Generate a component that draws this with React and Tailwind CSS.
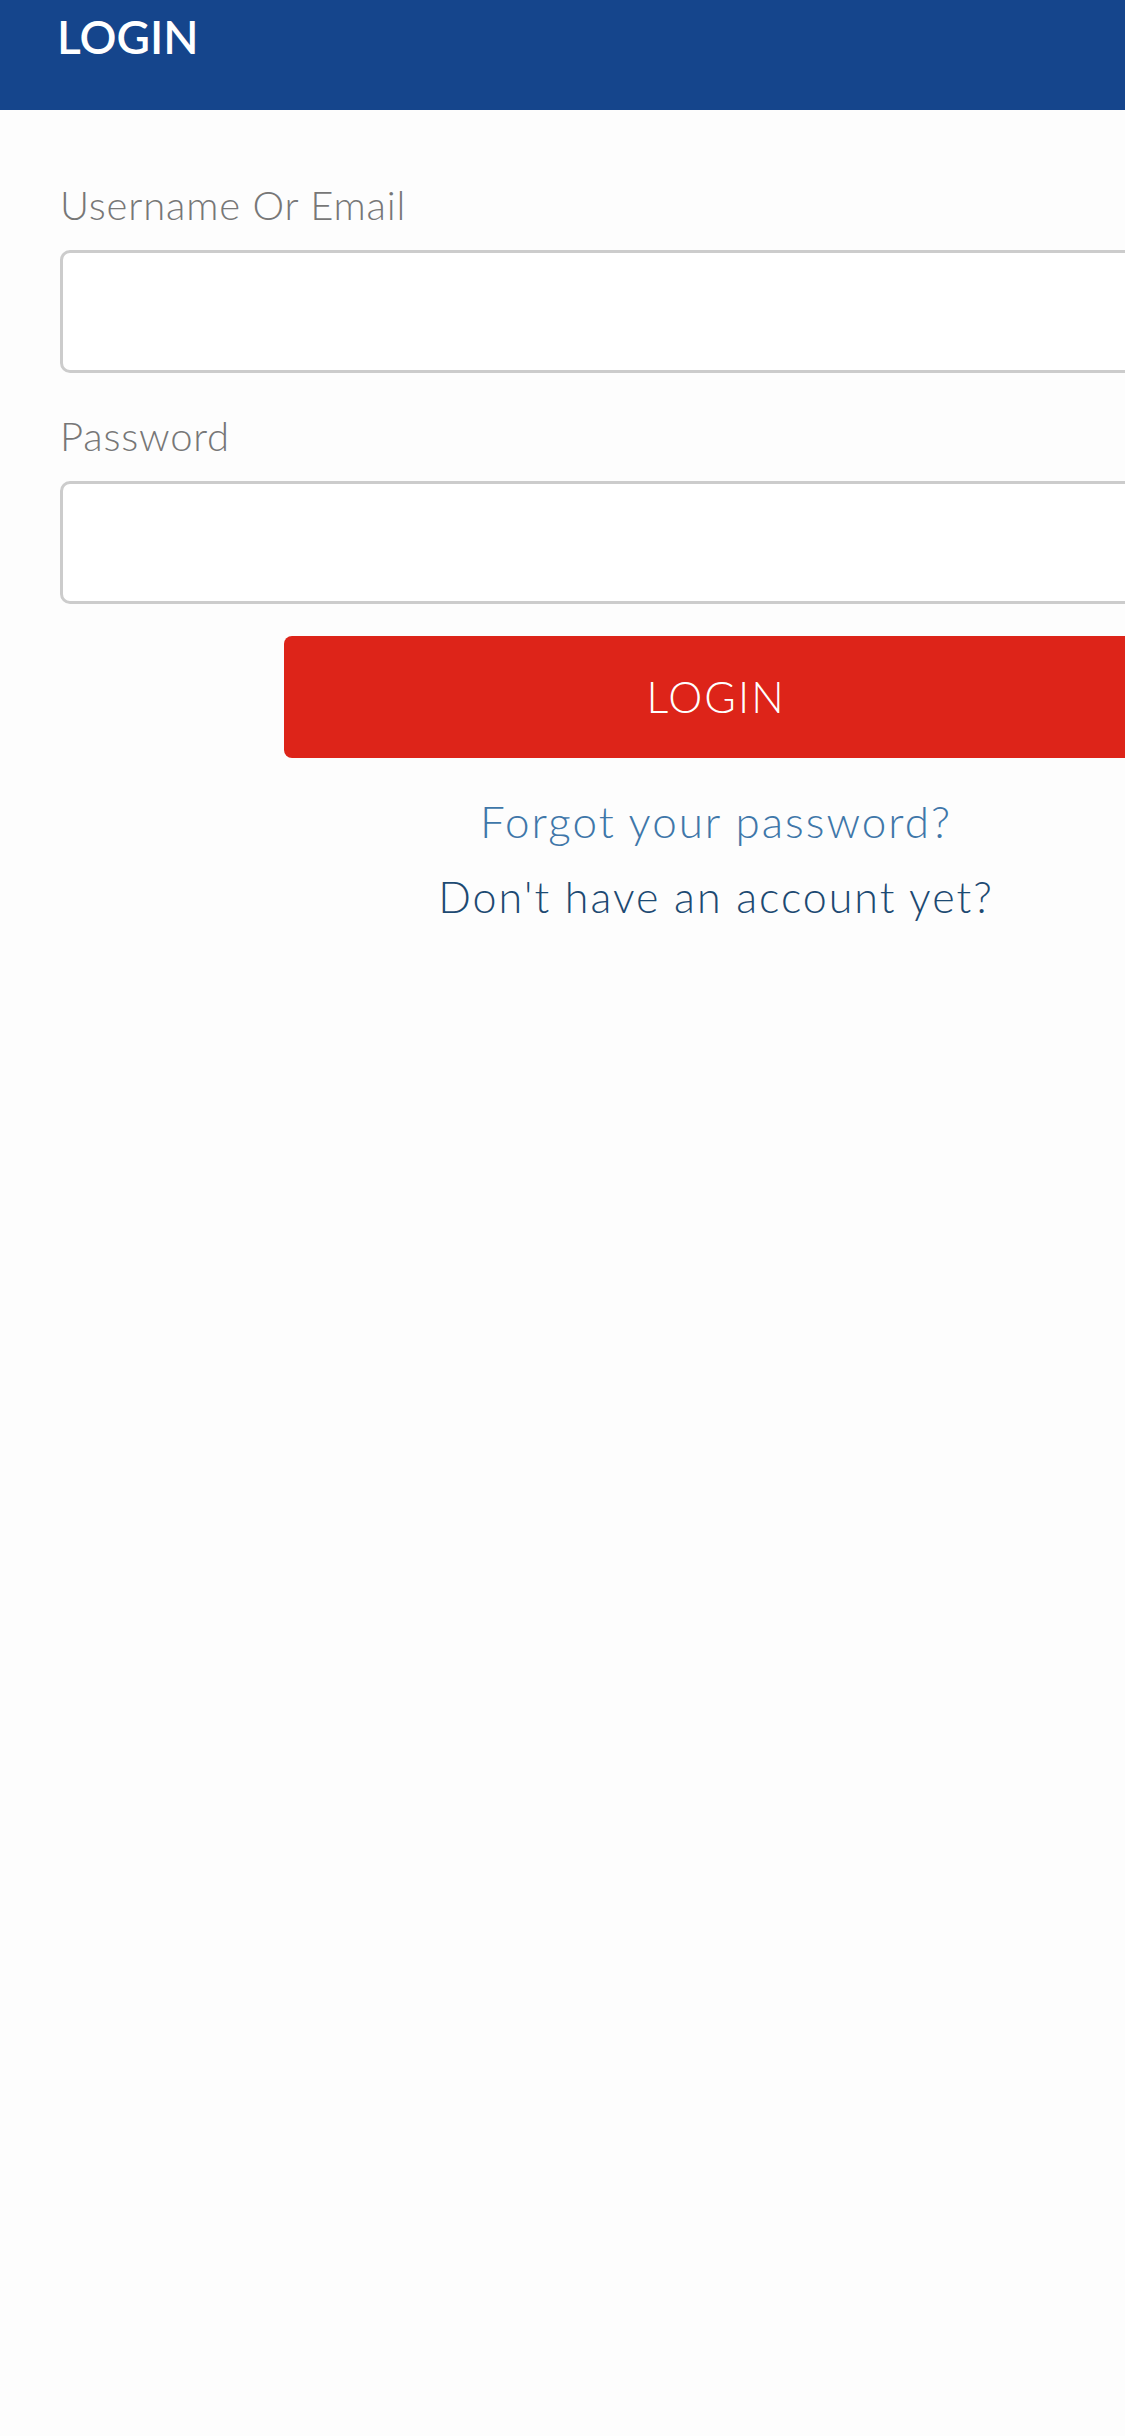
import React, { useState } from 'react';

const Field = ({ label, type, value, onChange, className }) => (
  <div className={className}>
    <label className="block text-[40px] leading-[40px] font-light tracking-[0.8px] text-[#777777]">{label}</label>
    <input
      type={type}
      value={value}
      onChange={e => onChange(e.target.value)}
      className="mt-[25px] block w-full h-[123px] px-6 bg-white border-[3px] border-[#cccccc] rounded-[10px] text-[40px] text-[#333] focus:outline-none"
    />
  </div>
);

const App = () => {
  const [user, setUser] = useState('');
  const [password, setPassword] = useState('');

  return (
    <div className="w-[1125px] min-h-[2436px] overflow-hidden bg-[#fdfdfd] font-['Lato',sans-serif]">
      <div className="w-[1432px]">
        <header className="h-[110px] bg-[#15458c] pl-[57px] pt-[14px]">
          <h1 className="text-[46px] leading-[46px] font-semibold text-white">LOGIN</h1>
        </header>

        <form onSubmit={e => e.preventDefault()} className="px-[60px] pt-[75px]">
          <Field label="Username Or Email" type="text" value={user} onChange={setUser} />
          <Field label="Password" type="password" value={password} onChange={setPassword} className="mt-[43px]" />

          <button
            type="submit"
            className="mt-[32px] mx-auto flex items-center justify-center w-[864px] h-[122px] rounded-[8px] bg-[#dd2419] text-white text-[43px] font-light tracking-[2px]"
          >
            LOGIN
          </button>

          <div className="mt-[41px] flex flex-col items-center">
            <a href="#" className="text-[44px] leading-[44px] font-light tracking-[2px] text-[#3f77a9]">Forgot your password?</a>
            <a href="#" className="mt-[32px] text-[43px] leading-[43px] font-light tracking-[2px] text-[#1d4a72]">Don't have an account yet?</a>
          </div>
        </form>
      </div>
    </div>
  );
};

export default App;
